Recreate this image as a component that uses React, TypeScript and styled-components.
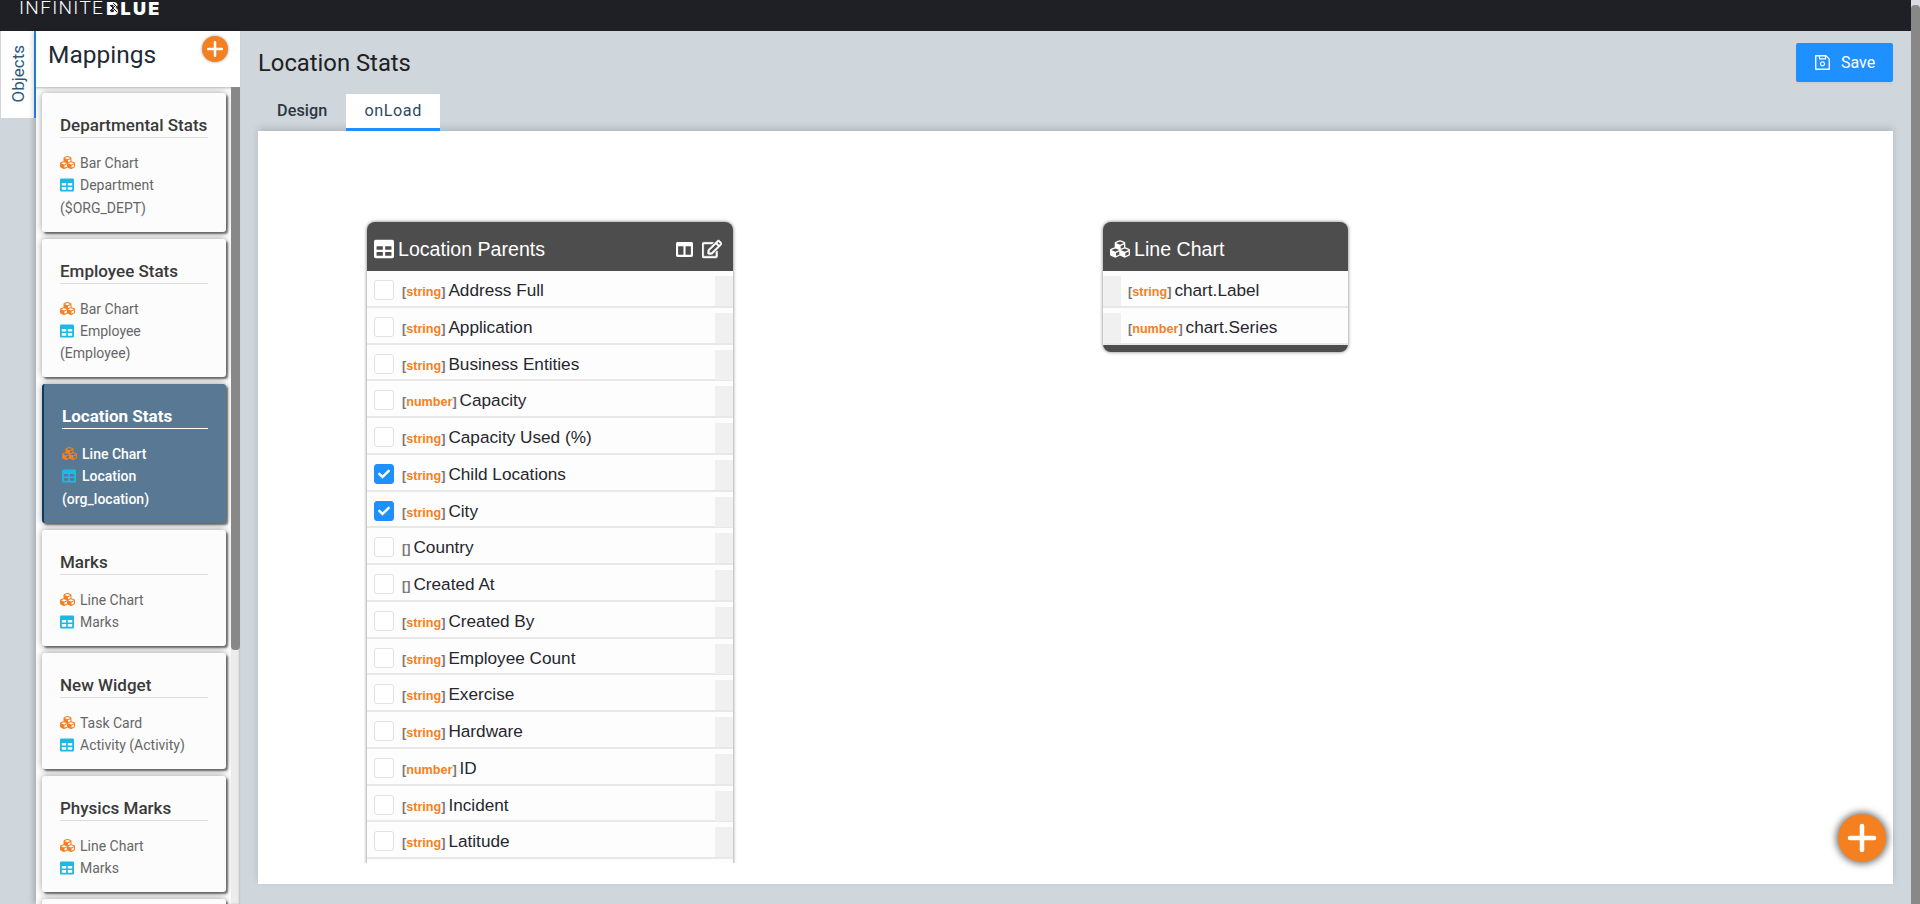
import React from 'react';
import styled, { createGlobalStyle } from 'styled-components';
import { FaCubes, FaColumns, FaRegEdit, FaCheck } from 'react-icons/fa';
import { AiOutlineSave } from 'react-icons/ai';

const GlobalStyle = createGlobalStyle`
    html, body {
        margin: 0;
        height: 100%;
        overflow: hidden;
        background: #cfd7dd;
    }
    * {
        box-sizing: border-box;
    }
    body {
        font-family: Roboto, "Liberation Sans", sans-serif;
    }
`
const Page = styled.div`
    display: flex;
    height: 904px;
    width: 1920px;
    overflow: hidden;
`
const Shell = styled.div`
    flex: 1;
    min-width: 0;
    display: flex;
    flex-direction: column;
`
const PageTrack = styled.div`
    width: 9px;
    padding-top: 5px;
    background: #d6dce1;
`
const PageThumb = styled.div`
    height: 100%;
    background: #888888;
    border-radius: 4px 4px 0 0;
`
const TopBar = styled.header`
    height: 31px;
    flex: none;
    display: flex;
    align-items: flex-start;
    padding-left: 19px;
    background: #1e2026;
    color: #ffffff;
    overflow: hidden;
`
const LogoThin = styled.span`
    font-family: Roboto, sans-serif;
    font-weight: 300;
    font-size: 19px;
    line-height: 16px;
    letter-spacing: 1.3px;
`
const LogoBold = styled.span`
    position: relative;
    margin-left: 2px;
    margin-top: 1px;
    font-family: Inter, sans-serif;
    font-weight: 900;
    font-size: 18px;
    line-height: 15px;
    letter-spacing: 2.3px;
`
const LogoMark = styled.svg`
    position: absolute;
    left: 1px;
    top: 1px;
    width: 13px;
    height: 13px;
`
const Body = styled.div`
    flex: 1;
    min-height: 0;
    display: flex;
`
const ObjectsRail = styled.div`
    width: 36px;
    flex: none;
    padding-left: 1px;
`
const ObjectsTab = styled.div`
    height: 87px;
    display: flex;
    align-items: center;
    justify-content: center;
    padding-bottom: 2px;
    background: #ffffff;
    border-right: 2px solid #1e90ff;
`
const ObjectsLabel = styled.span`
    writing-mode: vertical-rl;
    transform: rotate(180deg);
    font-size: 17px;
    color: #2f5878;
`
const Sidebar = styled.aside`
    width: 204px;
    flex: none;
    display: flex;
    flex-direction: column;
    background: #ffffff;
    box-shadow: -3px 0 5px rgba(0, 0, 0, 0.18);
`
const SidebarHead = styled.div`
    height: 56px;
    flex: none;
    position: relative;
    padding: 10px 0 0 12px;
`
const SidebarTitle = styled.h2`
    margin: 0;
    font-size: 24.5px;
    font-weight: 400;
    line-height: 28px;
    color: #1f2a36;
`
const RoundButton = styled.button<{ $size: number }>`
    position: absolute;
    display: flex;
    align-items: center;
    justify-content: center;
    width: ${props => props.$size}px;
    height: ${props => props.$size}px;
    padding: 0;
    border: 0;
    border-radius: 50%;
    background: #f58020;
    color: #ffffff;
`
const HeadAdd = styled(RoundButton)`
    top: 5px;
    right: 12px;
    box-shadow: 0 0 3px rgba(0, 0, 0, 0.4);
`
const FloatingAdd = styled(RoundButton)`
    right: 7px;
    bottom: 22px;
    box-shadow: 0 0 7px 2px rgba(0, 0, 0, 0.55);
`
const ListWrap = styled.div`
    flex: 1;
    min-height: 0;
    display: flex;
    box-shadow: inset 0 3px 3px -2px rgba(0, 0, 0, 0.3);
`
const CardList = styled.div`
    flex: 1;
    min-width: 0;
    overflow: hidden;
    display: flex;
    flex-direction: column;
    gap: 7px;
    padding: 6px 5px 0 6px;
`
const ListTrack = styled.div`
    width: 9px;
    flex: none;
    background: #ececec;
    box-shadow: inset -1px 0 2px rgba(0, 0, 0, 0.2);
`
const ListThumb = styled.div`
    height: 563px;
    background: #888888;
    border-radius: 0 0 4px 4px;
`
const Card = styled.div<{ $active?: boolean }>`
    flex: none;
    min-height: 116px;
    padding: 22px 18px 12.75px 18px;
    border-left: ${props => props.$active ? '2px solid #0f3a5f' : '0'};
    border-radius: 3px;
    background: ${props => props.$active ? '#587893' : '#fcfcfc'};
    color: ${props => props.$active ? '#ffffff' : '#666666'};
    box-shadow: 2px 2px 2px rgba(0, 0, 0, 0.5), 0 0 7px rgba(0, 0, 0, 0.4);
`
const CardTitle = styled.div<{ $active?: boolean }>`
    height: 23px;
    line-height: 20px;
    font-size: 17px;
    font-weight: ${props => props.$active ? 700 : 500};
    color: ${props => props.$active ? '#ffffff' : '#3a3a3a'};
    border-bottom: 1px solid ${props => props.$active ? '#ffffff' : '#dddddd'};
    margin-bottom: 14px;
`
const CardLine = styled.div<{ $active?: boolean }>`
    font-size: 14px;
    line-height: 22.25px;
    font-weight: ${props => props.$active ? 500 : 400};
`
const CubeMark = styled(FaCubes)`
    color: #f58020;
    font-size: 15px;
    margin-right: 5px;
    vertical-align: -2px;
`
const TableSvg = styled.svg<{ $size: number; $color: string }>`
    width: ${props => props.$size}px;
    height: ${props => props.$size}px;
    flex: none;
    color: ${props => props.$color};
`
const CardTable = styled(TableSvg)`
    margin-right: 6px;
    vertical-align: -2px;
`
const Main = styled.main`
    flex: 1;
    min-width: 0;
    display: flex;
    flex-direction: column;
    padding: 12px 18px 20px 18px;
`
const MainHead = styled.div`
    height: 39px;
    flex: none;
    display: flex;
    align-items: center;
    justify-content: space-between;
`
const MainTitle = styled.h1`
    margin: 0;
    font-size: 23.8px;
    font-weight: 400;
    color: #212121;
`
const SaveButton = styled.button`
    width: 97px;
    height: 39px;
    display: flex;
    align-items: center;
    padding: 0 0 0 17px;
    gap: 9px;
    border: 0;
    border-radius: 2px;
    background: #1e90ff;
    color: #ffffff;
    font-family: Roboto, sans-serif;
    font-size: 16px;
    box-shadow: 0 2px 0 rgba(0, 0, 0, 0.03);
`
const TabRow = styled.div`
    height: 37px;
    flex: none;
    margin-top: 12px;
    display: flex;
`
const Tab = styled.div<{ $active?: boolean }>`
    position: relative;
    z-index: 1;
    padding: 0 ${props => props.$active ? 18 : 19}px 0 ${props => props.$active ? 18 : 19}px;
    line-height: 34px;
    font-size: 16.2px;
    font-weight: ${props => props.$active ? 400 : 500};
    letter-spacing: ${props => props.$active ? 0.55 : 0.1}px;
    color: ${props => props.$active ? '#2b4a62' : '#2b3640'};
    background: ${props => props.$active ? '#ffffff' : 'transparent'};
    border-bottom: 3px solid ${props => props.$active ? '#1e90ff' : 'transparent'};
`
const Canvas = styled.section`
    flex: 1;
    min-height: 0;
    position: relative;
    padding-bottom: 21px;
    background: #ffffff;
    box-shadow: 0 -3px 7px rgba(0, 0, 0, 0.14);
`
const CanvasClip = styled.div`
    position: relative;
    height: 100%;
    overflow: hidden;
`
const Node = styled.div<{ $left: number; $width: number }>`
    position: absolute;
    left: ${props => props.$left}px;
    top: 91px;
    width: ${props => props.$width}px;
    border-radius: 8px;
    background: #4d4d4d;
    box-shadow: 0 0 3px 1px rgba(0, 0, 0, 0.32);
`
const NodeHead = styled.div`
    height: 49px;
    display: flex;
    align-items: center;
    gap: 4px;
    padding: 5px 11px 0 7px;
    color: #ffffff;
    font-family: "Liberation Sans", Arial, sans-serif;
    font-size: 19.6px;
`
const NodeName = styled.span`
    flex: 1;
`
const NodeTools = styled.span`
    display: flex;
    align-items: center;
    gap: 9px;
    font-size: 17px;
`
const EditTool = styled(FaRegEdit)`
    font-size: 20px;
    stroke: currentColor;
    stroke-width: 14;
`
const Rows = styled.div<{ $footer?: boolean }>`
    margin-bottom: ${props => props.$footer ? 7 : 0}px;
`
const Row = styled.div`
    height: 36.75px;
    display: flex;
    align-items: flex-start;
    background: #fdfdfd;
    border-bottom: 2px solid #e8e8e8;
`
const Tick = styled.span<{ $on?: boolean }>`
    width: 20px;
    height: 20px;
    flex: none;
    margin: 9px 8px 0 7px;
    display: flex;
    align-items: center;
    justify-content: center;
    border-radius: 3px;
    border: 1px solid ${props => props.$on ? '#1e90ff' : '#e2e2e2'};
    background: ${props => props.$on ? '#1e90ff' : '#ffffff'};
    color: #ffffff;
    font-size: 12px;
`
const Port = styled.span`
    width: 18px;
    height: 30px;
    flex: none;
    margin-top: 5px;
    background: #f0f0f0;
`
const RowText = styled.span`
    flex: 1;
    min-width: 0;
    display: flex;
    align-items: baseline;
    gap: 3px;
    padding-top: 9px;
    font-family: "Liberation Sans", Arial, sans-serif;
    font-size: 17.2px;
    line-height: 20px;
    color: #26262e;
`
const OutputText = styled(RowText)`
    padding-left: 7px;
`
const TypeTag = styled.span`
    font-size: 12.6px;
    font-weight: 700;
    color: #777777;
`
const TypeName = styled.span`
    color: #f58020;
`

const TableIcon = ({ size, color, as: Comp = TableSvg }: { size: number; color: string; as?: typeof TableSvg }) => (
    <Comp viewBox="0 0 14 14" $size={size} $color={color}>
        <path
            fillRule="evenodd"
            fill="currentColor"
            d="M1.2 0.5h11.6a1.2 1.2 0 0 1 1.2 1.2v10.6a1.2 1.2 0 0 1-1.2 1.2H1.2A1.2 1.2 0 0 1 0 12.3V1.7A1.2 1.2 0 0 1 1.2 0.5zM1.8 5v2.5h4.4V5zM7.8 5v2.5h4.4V5zM1.8 9.1v2.6h4.4V9.1zM7.8 9.1v2.6h4.4V9.1z"
        />
    </Comp>
)

const PlusIcon = ({ size, weight }: { size: number; weight: number }) => (
    <svg width={size} height={size} viewBox="0 0 24 24">
        <path d="M12 3v18M3 12h18" stroke="currentColor" strokeWidth={weight} strokeLinecap="round" fill="none" />
    </svg>
)

interface IMapping {
    title: string,
    chart?: string,
    source?: string,
    active?: boolean
}
const mappings: IMapping[] = [
    { title: 'Departmental Stats', chart: 'Bar Chart', source: 'Department ($ORG_DEPT)' },
    { title: 'Employee Stats', chart: 'Bar Chart', source: 'Employee (Employee)' },
    { title: 'Location Stats', chart: 'Line Chart', source: 'Location (org_location)', active: true },
    { title: 'Marks', chart: 'Line Chart', source: 'Marks' },
    { title: 'New Widget', chart: 'Task Card', source: 'Activity (Activity)' },
    { title: 'Physics Marks', chart: 'Line Chart', source: 'Marks' },
    { title: '' },
]
interface IField {
    type: string,
    name: string,
    checked?: boolean
}
const fields: IField[] = [
    { type: 'string', name: 'Address Full' },
    { type: 'string', name: 'Application' },
    { type: 'string', name: 'Business Entities' },
    { type: 'number', name: 'Capacity' },
    { type: 'string', name: 'Capacity Used (%)' },
    { type: 'string', name: 'Child Locations', checked: true },
    { type: 'string', name: 'City', checked: true },
    { type: '', name: 'Country' },
    { type: '', name: 'Created At' },
    { type: 'string', name: 'Created By' },
    { type: 'string', name: 'Employee Count' },
    { type: 'string', name: 'Exercise' },
    { type: 'string', name: 'Hardware' },
    { type: 'number', name: 'ID' },
    { type: 'string', name: 'Incident' },
    { type: 'string', name: 'Latitude' },
    { type: '', name: '' },
]
const outputs: IField[] = [
    { type: 'string', name: 'chart.Label' },
    { type: 'number', name: 'chart.Series' },
]

const Type = ({ type }: { type: string }) => (
    <TypeTag>[<TypeName>{type}</TypeName>]</TypeTag>
)

function App() {
    return (
        <Page>
            <GlobalStyle />
            <Shell>
                <TopBar>
                    <LogoThin>INFINITE</LogoThin>
                    <LogoBold>
                        BLUE
                        <LogoMark viewBox="0 0 13 13">
                            <path d="M3 3l7 7M3 9l6-6M6 1l4 4" stroke="#1e2026" strokeWidth="1" fill="none" />
                        </LogoMark>
                    </LogoBold>
                </TopBar>
                <Body>
                    <ObjectsRail>
                        <ObjectsTab>
                            <ObjectsLabel>Objects</ObjectsLabel>
                        </ObjectsTab>
                    </ObjectsRail>
                    <Sidebar>
                        <SidebarHead>
                            <SidebarTitle>Mappings</SidebarTitle>
                            <HeadAdd $size={26}><PlusIcon size={18} weight={3.4} /></HeadAdd>
                        </SidebarHead>
                        <ListWrap>
                            <CardList>
                                {mappings.map((m, i) => (
                                    <Card key={i} $active={m.active}>
                                        <CardTitle $active={m.active}>{m.title}</CardTitle>
                                        {m.chart && (
                                            <CardLine $active={m.active}>
                                                <CubeMark />{m.chart}
                                            </CardLine>
                                        )}
                                        {m.source && (
                                            <CardLine $active={m.active}>
                                                <TableIcon as={CardTable} size={14} color="#1cb9e6" />{m.source}
                                            </CardLine>
                                        )}
                                    </Card>
                                ))}
                            </CardList>
                            <ListTrack>
                                <ListThumb />
                            </ListTrack>
                        </ListWrap>
                    </Sidebar>
                    <Main>
                        <MainHead>
                            <MainTitle>Location Stats</MainTitle>
                            <SaveButton><AiOutlineSave size={19} />Save</SaveButton>
                        </MainHead>
                        <TabRow>
                            <Tab>Design</Tab>
                            <Tab $active>onLoad</Tab>
                        </TabRow>
                        <Canvas>
                            <CanvasClip>
                                <Node $left={109} $width={366}>
                                    <NodeHead>
                                        <TableIcon size={20} color="#ffffff" />
                                        <NodeName>Location Parents</NodeName>
                                        <NodeTools><FaColumns /><EditTool /></NodeTools>
                                    </NodeHead>
                                    <Rows>
                                        {fields.map((f, i) => (
                                            <Row key={i}>
                                                <Tick $on={f.checked}>{f.checked && <FaCheck />}</Tick>
                                                <RowText>{f.name && <Type type={f.type} />}{f.name}</RowText>
                                                <Port />
                                            </Row>
                                        ))}
                                    </Rows>
                                </Node>
                                <Node $left={845} $width={245}>
                                    <NodeHead>
                                        <FaCubes size={20} />
                                        <NodeName>Line Chart</NodeName>
                                    </NodeHead>
                                    <Rows $footer>
                                        {outputs.map(f => (
                                            <Row key={f.name}>
                                                <Port />
                                                <OutputText><Type type={f.type} />{f.name}</OutputText>
                                            </Row>
                                        ))}
                                    </Rows>
                                </Node>
                            </CanvasClip>
                            <FloatingAdd $size={48}><PlusIcon size={32} weight={3.4} /></FloatingAdd>
                        </Canvas>
                    </Main>
                </Body>
            </Shell>
            <PageTrack>
                <PageThumb />
            </PageTrack>
        </Page>
    )
}

export default App;
